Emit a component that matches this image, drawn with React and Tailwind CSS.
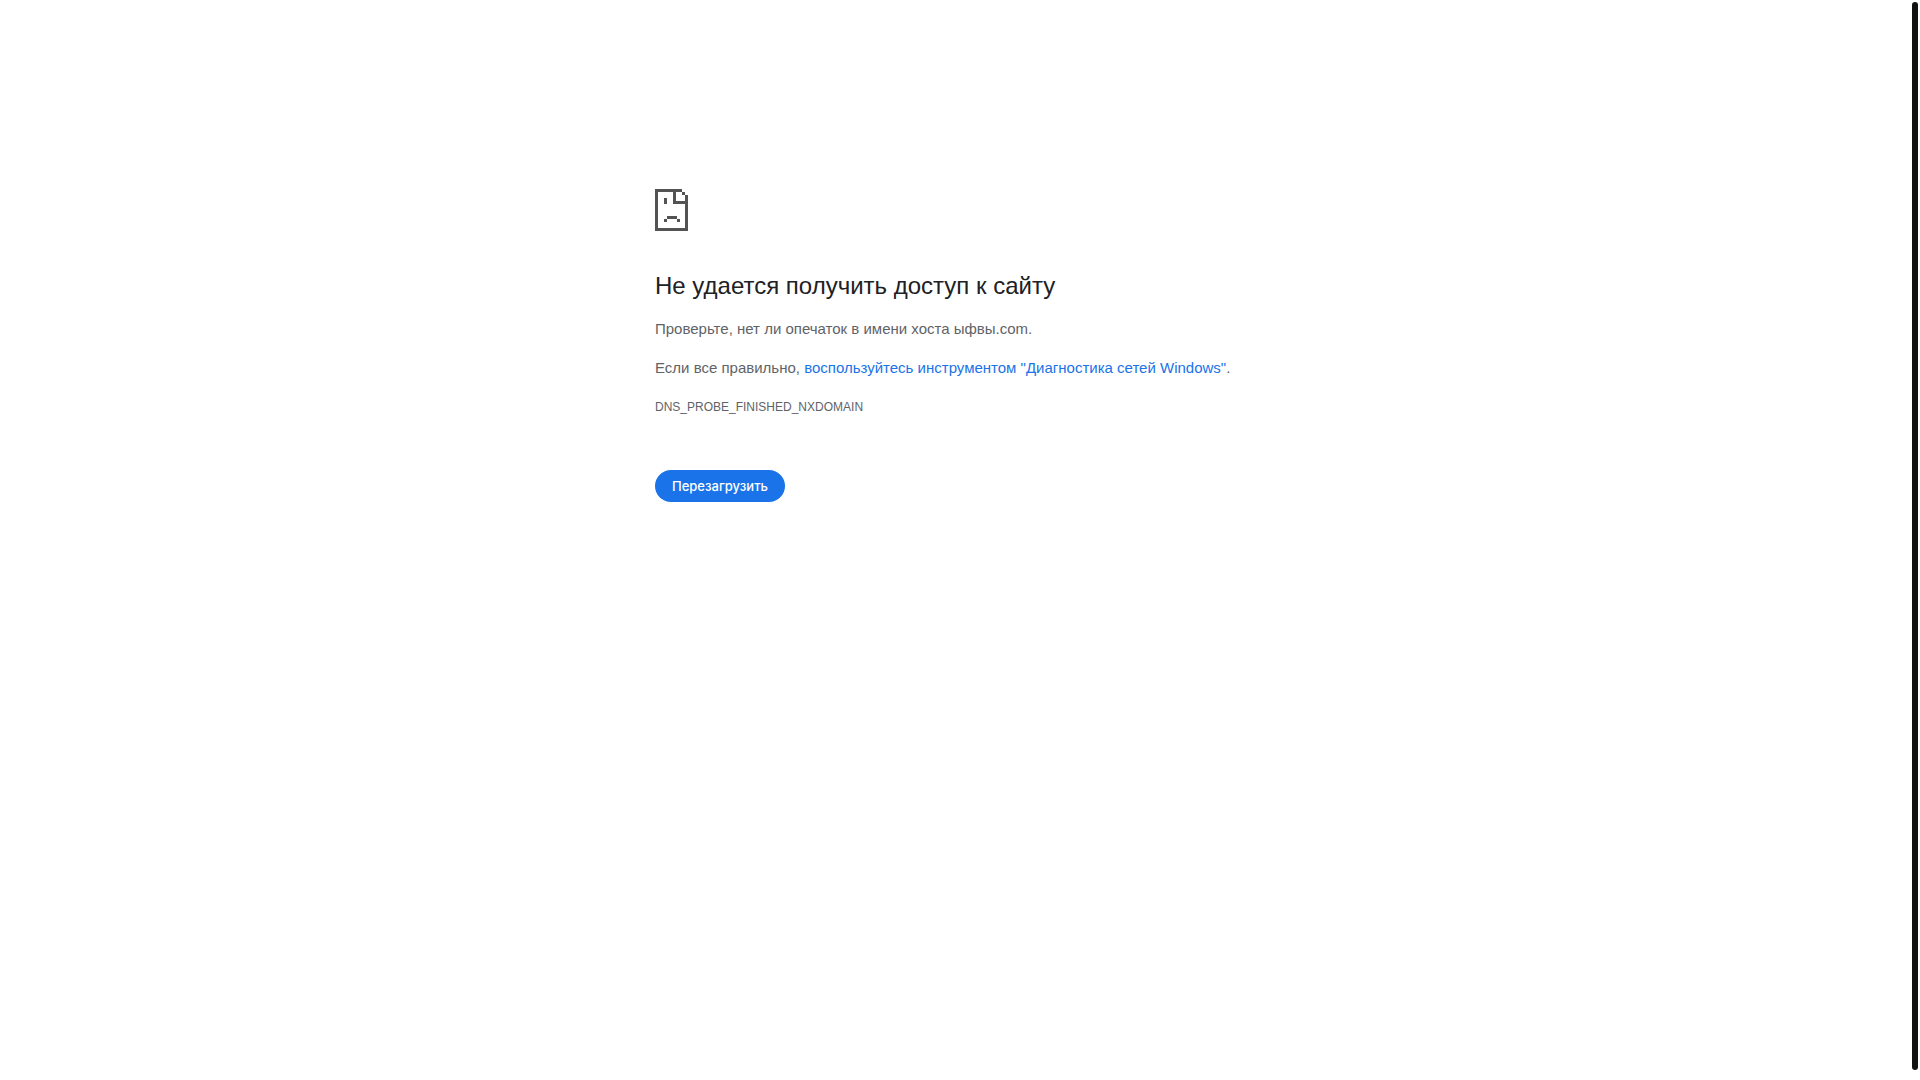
import React from 'react';

const ErrorIcon = () => (
  <svg width="33" height="42" viewBox="0 0 33 42" fill="#535353" shapeRendering="crispEdges" aria-hidden="true">
    <path fillRule="evenodd" d="M0 0h27v3H21v9h9V6h3v36H0zM3 3v36h27V15H18V3z" />
    <path d="M27 3h3v3h-3zM9 9h3v6H9zM12 27h10v3H12zM9 30h3v3H9zM22 30h3v3h-3z" />
  </svg>
);

const App = () => {
  return (
    <div className="flex min-h-screen bg-white font-['Liberation_Sans',Arial,sans-serif] text-[#5f6368]">
      {/* Error Message */}
      <div className="grow pr-0.5">
        <main className="mx-auto max-w-[600px] pt-[189px] text-[15px] leading-6">
          <ErrorIcon />
          <h1 className="mt-10 mb-4 text-2xl leading-[30px] text-[#202124]">
            Не удается получить доступ к сайту
          </h1>
          <p>Проверьте, нет ли опечаток в имени хоста ыфвы.com.</p>
          <p className="mt-[15px]">
            Если все правильно,{' '}
            <a href="#diagnose" className="text-[#1a73e8]">
              воспользуйтесь инструментом "Диагностика сетей Windows"
            </a>
            .
          </p>
          <div className="mt-[15px] text-xs leading-6">DNS_PROBE_FINISHED_NXDOMAIN</div>
          <button
            type="button"
            className="mt-[51px] h-8 rounded-full bg-[#1a73e8] px-[17px] font-['Inter',sans-serif] text-[13px] font-medium text-white"
          >
            Перезагрузить
          </button>
        </main>
      </div>

      {/* Scrollbar */}
      <div className="flex w-2 flex-col pt-0.5 pr-0.5 pb-2.5">
        <div className="grow rounded-full bg-[#111111]" />
      </div>
    </div>
  );
};

export default App;
